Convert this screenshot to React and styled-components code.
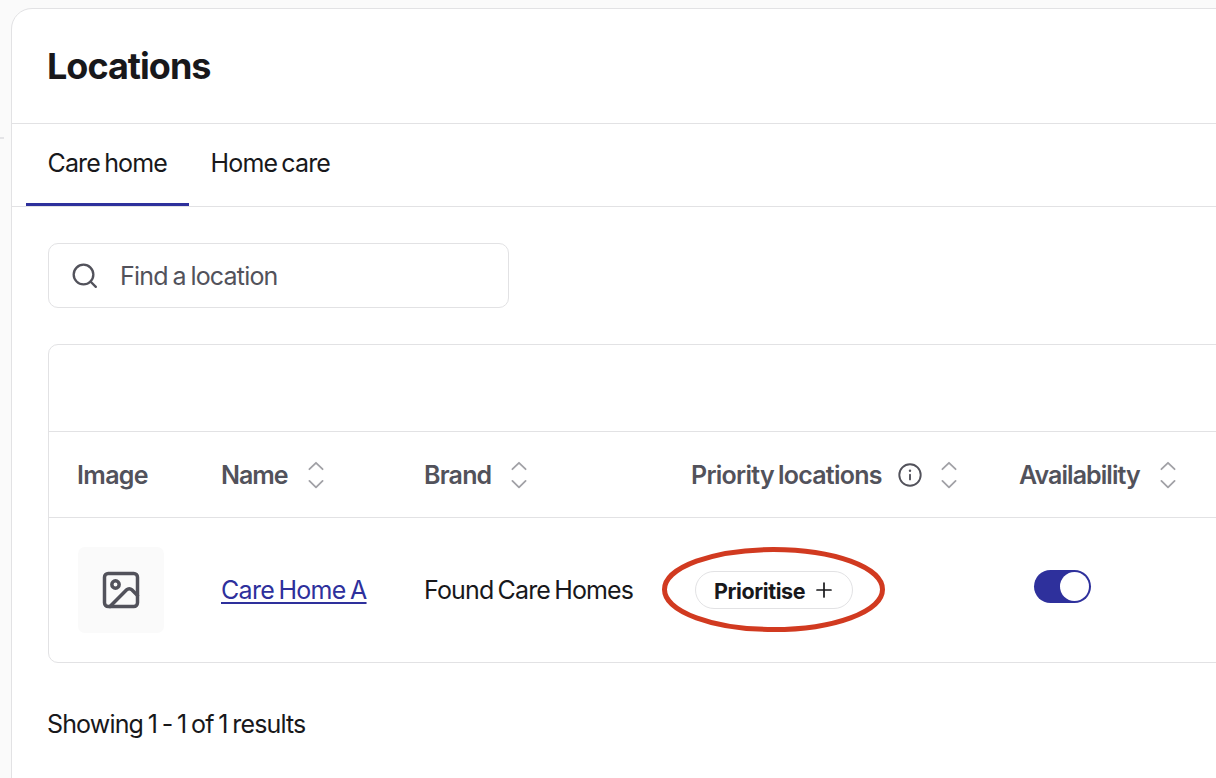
import React, { useState } from "react";
import styled, { createGlobalStyle } from "styled-components";
import { Image, Search } from "lucide-react";

const tabs = ["Care home", "Home care"];

const columns = [
  { label: "Image", spacing: "-0.65px" },
  { label: "Name", spacing: "-1px", sortable: true },
  { label: "Brand", spacing: "-0.8px", sortable: true },
  {
    label: "Priority locations",
    spacing: "-0.75px",
    sortable: true,
    info: true,
  },
  { label: "Availability", spacing: "-0.95px", sortable: true },
];

function SortIcon() {
  return (
    <svg width="16" height="28" viewBox="0 0 16 28" fill="none">
      <path
        d="M1.4 8.2 8 1.8l6.6 6.4M1.4 19.9 8 26.3l6.6-6.4"
        stroke="#a1a1a6"
        strokeWidth="1.8"
        strokeLinecap="round"
        strokeLinejoin="round"
      />
    </svg>
  );
}

function InfoIcon() {
  return (
    <svg width="24" height="24" viewBox="0 0 24 24" fill="none">
      <circle cx="12" cy="12" r="10.7" stroke="#52525b" strokeWidth="1.9" />
      <circle cx="12" cy="7.7" r="1.2" fill="#52525b" />
      <path
        d="M12 11.8v4.6"
        stroke="#52525b"
        strokeWidth="1.9"
        strokeLinecap="round"
      />
    </svg>
  );
}

function App() {
  const [activeTab, setActiveTab] = useState(tabs[0]);
  const [available, setAvailable] = useState(true);

  return (
    <Page>
      <GlobalStyle />
      <Rail>
        <RailMark />
      </Rail>
      <Panel>
        <Header>
          <Title>Locations</Title>
        </Header>
        <Tabs>
          {tabs.map((tab) => (
            <Tab
              key={tab}
              $active={tab === activeTab}
              onClick={() => setActiveTab(tab)}
            >
              {tab}
            </Tab>
          ))}
        </Tabs>
        <Content>
          <SearchBox>
            <Search size={29.5} color="#52525b" strokeWidth={1.9} />
            <SearchInput type="text" placeholder="Find a location" />
          </SearchBox>
          <Table>
            <Toolbar />
            <HeadRow>
              {columns.map((column) => (
                <HeadCell key={column.label}>
                  <Label $spacing={column.spacing}>{column.label}</Label>
                  {column.info && <InfoIcon />}
                  {column.sortable && <SortIcon />}
                </HeadCell>
              ))}
            </HeadRow>
            <BodyRow>
              <Thumbnail>
                <Image size={44} color="#52525b" strokeWidth={1.9} />
              </Thumbnail>
              <NameLink href="#">Care Home A</NameLink>
              <Brand>Found Care Homes</Brand>
              <PriorityCell>
                <PriorityButton>
                  Prioritise
                  <svg width="16" height="16" viewBox="0 0 16 16">
                    <path
                      d="M8 1v14M1 8h14"
                      stroke="#18181b"
                      strokeWidth="1.7"
                      strokeLinecap="round"
                    />
                  </svg>
                </PriorityButton>
                <Highlight viewBox="0 0 224 86">
                  <ellipse cx="111.5" cy="42.5" rx="109" ry="40" />
                </Highlight>
              </PriorityCell>
              <Toggle
                $on={available}
                aria-pressed={available}
                onClick={() => setAvailable(!available)}
              >
                <Knob />
              </Toggle>
            </BodyRow>
          </Table>
          <Results>Showing 1 - 1 of 1 results</Results>
        </Content>
      </Panel>
    </Page>
  );
}

export default App;

const GlobalStyle = createGlobalStyle`
  * {
    box-sizing: border-box;
  }

  body {
    margin: 0;
    overflow: hidden;
    background-color: #fafafa;
    color: #18181b;
    font-family: Inter, "Liberation Sans", sans-serif;
    font-size: 25px;
  }

  button, input {
    font-family: inherit;
    color: inherit;
  }
`;

const Page = styled.div`
  display: flex;
  height: 778px;
  padding-top: 8px;
  overflow: hidden;
`;

const Rail = styled.div`
  flex: 0 0 11px;
  padding-top: 129px;
`;

const RailMark = styled.div`
  width: 4px;
  height: 2px;
  background-color: #e4e4e7;
`;

const Panel = styled.main`
  flex: 0 0 1300px;
  height: 800px;
  border: 1px solid #e2e2e4;
  border-radius: 21px 0 0 0;
  background-color: #fff;
`;

const Header = styled.header`
  display: flex;
  align-items: center;
  height: 115px;
  padding: 0 35px;
  border-bottom: 1px solid #e2e2e4;
`;

const Title = styled.h1`
  margin: 0;
  font-size: 36px;
  font-weight: 700;
  letter-spacing: -1px;
`;

const Tabs = styled.nav`
  display: flex;
  height: 83px;
  padding-left: 14px;
  border-bottom: 1px solid #e2e2e4;
`;

const Tab = styled.button`
  height: 82px;
  padding: 0 22px 1px 21.5px;
  border: none;
  border-bottom: 3px solid ${({ $active }) => ($active ? "#2e309c" : "transparent")};
  background: none;
  font-size: 25px;
  letter-spacing: -0.85px;
  word-spacing: -2px;
  white-space: nowrap;
  cursor: pointer;
`;

const Content = styled.section`
  padding: 36px 0 0 36px;
`;

const SearchBox = styled.div`
  display: flex;
  align-items: center;
  gap: 21px;
  width: 461px;
  height: 65px;
  padding-left: 20.5px;
  border: 1px solid #e2e2e4;
  border-radius: 10px;
`;

const SearchInput = styled.input`
  width: 340px;
  padding: 0;
  border: none;
  outline: none;
  background: none;
  font-size: 25px;
  letter-spacing: -0.8px;
  word-spacing: -1.5px;

  &::placeholder {
    color: #52525b;
    opacity: 1;
  }
`;

const Table = styled.div`
  margin-top: 36px;
  border: 1px solid #e2e2e4;
  border-radius: 10px;
`;

const Toolbar = styled.div`
  height: 87px;
  border-bottom: 1px solid #e2e2e4;
`;

const Row = styled.div`
  display: grid;
  align-items: center;
`;

const HeadRow = styled(Row)`
  grid-template-columns: 144px 203px 267px 328px 1fr;
  height: 86px;
  padding-left: 28px;
  border-bottom: 1px solid #e2e2e4;
`;

const BodyRow = styled(Row)`
  grid-template-columns: 143px 203px 267px 329px 1fr;
  height: 144px;
  padding-left: 29px;
`;

const HeadCell = styled.div`
  display: flex;
  align-items: center;
  white-space: nowrap;

  svg {
    flex: none;
    margin-left: 20px;
  }

  span + svg:not(:last-child) {
    margin-left: 16px;
  }

  svg + svg {
    margin-left: 19px;
  }
`;

const Label = styled.span`
  color: #52525b;
  font-weight: 600;
  letter-spacing: ${({ $spacing }) => $spacing};
  word-spacing: -1.5px;
`;

const Thumbnail = styled.div`
  display: flex;
  align-items: center;
  justify-content: center;
  width: 86px;
  height: 86px;
  padding: 0 1px 1px 0;
  border-radius: 7px;
  background-color: #fafafa;
`;

const NameLink = styled.a`
  color: #2e309c;
  letter-spacing: -0.7px;
  word-spacing: -2px;
  text-decoration: underline;
  text-decoration-thickness: 2px;
  text-underline-offset: 3px;
  white-space: nowrap;
`;

const Brand = styled.span`
  letter-spacing: -0.85px;
  word-spacing: -2px;
  white-space: nowrap;
`;

const PriorityCell = styled.div`
  position: relative;
  padding-left: 4px;
`;

const PriorityButton = styled.button`
  display: flex;
  align-items: center;
  gap: 11px;
  width: 158px;
  height: 38px;
  padding: 2px 0 0 18px;
  border: 1px solid #e2e2e4;
  border-radius: 19px;
  background-color: #fff;
  font-size: 21.5px;
  font-weight: 700;
  letter-spacing: -0.4px;
  cursor: pointer;

  svg {
    flex: none;
    margin-top: -2px;
  }
`;

const Highlight = styled.svg`
  position: absolute;
  left: -29px;
  top: -24px;
  width: 224px;
  height: 86px;
  pointer-events: none;

  ellipse {
    fill: none;
    stroke: #d13a20;
    stroke-width: 5;
  }
`;

const Toggle = styled.button`
  display: flex;
  align-items: center;
  justify-content: ${({ $on }) => ($on ? "flex-end" : "flex-start")};
  width: 57px;
  height: 33px;
  margin: 0 0 7px 14px;
  padding: 0 2px;
  border: none;
  border-radius: 17px;
  background-color: ${({ $on }) => ($on ? "#2e309c" : "#a1a1a6")};
  cursor: pointer;
`;

const Knob = styled.span`
  width: 29px;
  height: 29px;
  border-radius: 50%;
  background-color: #fff;
`;

const Results = styled.p`
  margin: 46px 0 0 -1px;
  letter-spacing: -0.85px;
  word-spacing: -1.5px;
`;
